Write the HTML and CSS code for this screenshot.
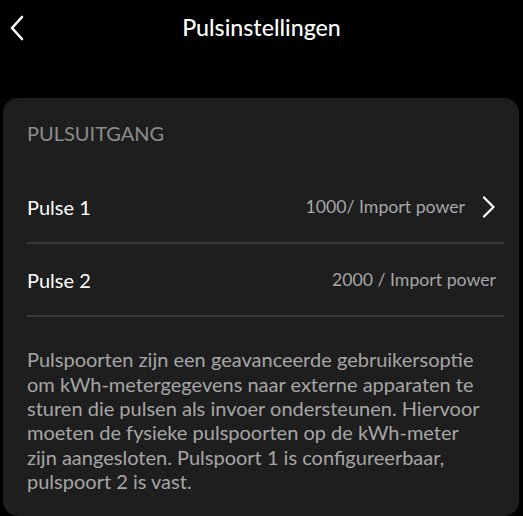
FILE: index.html
```html
<!DOCTYPE html>
<html lang="nl">
<head>
<meta charset="utf-8">
<link rel="stylesheet" href="styles.css">
</head>
<body>
<div class="screen">
  <header class="topbar">
    <button class="back" aria-label="Terug">
      <svg width="16" height="26" viewBox="0 0 16 26"><path d="M13 2 L3 13 L13 24" fill="none" stroke="#fff" stroke-width="2.6" stroke-linecap="round" stroke-linejoin="round"/></svg>
    </button>
    <h1 class="title">Pulsinstellingen</h1>
  </header>
  <section class="card">
    <div class="section-label">PULSUITGANG</div>
    <div class="row">
      <span class="row-label">Pulse 1</span>
      <span class="row-value">1000/ Import power</span>
      <svg class="chev" width="14" height="22" viewBox="0 0 14 22"><path d="M2 1.5 L11.5 11 L2 20.5" fill="none" stroke="#fff" stroke-width="2.2" stroke-linecap="round" stroke-linejoin="round"/></svg>
    </div>
    <div class="row">
      <span class="row-label">Pulse 2</span>
      <span class="row-value">2000 / Import power</span>
    </div>
    <p class="desc">Pulspoorten zijn een geavanceerde gebruikersoptie om kWh-metergegevens naar externe apparaten te sturen die pulsen als invoer ondersteunen. Hiervoor moeten de fysieke pulspoorten op de kWh-meter zijn aangesloten. Pulspoort 1 is configureerbaar, pulspoort 2 is vast.</p>
  </section>
</div>
</body>
</html>
```

FILE: styles.css
```css
html, body {
  margin: 0;
  padding: 0;
  background: #000;
  overflow: hidden;
}
body {
  font-family: Lato, "Open Sans", sans-serif;
  color: #fff;
}
.screen {
  width: 523px;
  height: 516px;
  display: flex;
  flex-direction: column;
}
.topbar {
  position: relative;
  height: 56px;
  display: flex;
  align-items: center;
  justify-content: center;
  margin-bottom: 44px;
}
.back {
  position: absolute;
  left: 9px;
  top: 15px;
  background: none;
  border: 0;
  padding: 0;
  display: flex;
}
.title {
  margin: 0;
  font-size: 23.2px;
  font-weight: 500;
  letter-spacing: 0;
}
.card {
  margin: 0 4px 0 3px;
  background: #1e1e1e;
  border-radius: 15px;
  padding: 22px 15px 0 24px;
  height: 430px;
  box-sizing: border-box;
}
.section-label {
  color: #8c8c8c;
  font-size: 20px;
  line-height: 26px;
  height: 51px;
}
.row {
  display: flex;
  align-items: center;
  height: 71px;
  border-bottom: 2px solid #383838;
  padding-right: 8px;
}
.row-label {
  font-size: 20px;
  flex: 1;
}
.row-value {
  font-size: 17.7px;
  color: #a6a6a6;
}
.row:first-of-type {
  height: 73px;
}
.chev {
  margin-left: 17px;
}
.desc {
  margin: 30px 20px 0 0;
  font-size: 20px;
  line-height: 24.3px;
  color: #a6a6a6;
}
```
